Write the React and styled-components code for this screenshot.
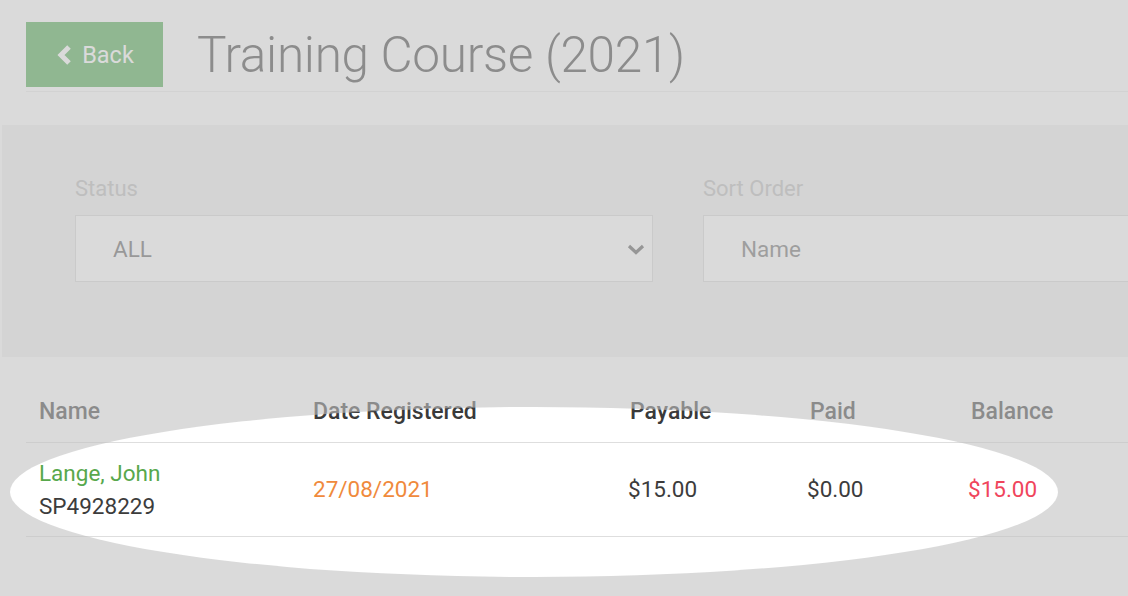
import React from "react";
import styled, { createGlobalStyle } from "styled-components";

const Global = createGlobalStyle`
  html, body {
    margin: 0;
    padding: 0;
    background: #fff;
    overflow: hidden;
  }
  * {
    box-sizing: border-box;
  }
`;

const Page = styled.div`
  position: relative;
  width: 1128px;
  height: 596px;
  overflow: hidden;
  background: #fff;
  font-family: Roboto, "Liberation Sans", sans-serif;
  color: #333;
`;

const Header = styled.div`
  display: flex;
  align-items: center;
  gap: 34px;
  margin: 0 0 0 26px;
  padding: 22px 0 4px 0;
  border-bottom: 1px solid #ececec;
`;

const BackButton = styled.button`
  display: flex;
  align-items: center;
  justify-content: center;
  gap: 10px;
  width: 137px;
  height: 65px;
  border: none;
  background: #47a74a;
  color: #fff;
  font-family: inherit;
  font-size: 23.5px;
  padding: 0 2px 0 3px;
  cursor: pointer;
`;

const Title = styled.h1`
  margin: 0;
  font-weight: 300;
  font-size: 49.5px;
  color: #3c3c3c;
  letter-spacing: -0.3px;
`;

const FilterPanel = styled.div`
  margin: 33px 0 0 2px;
  height: 232px;
  background: #efefef;
  padding: 51px 0 0 73px;
  display: grid;
  grid-template-columns: 578px 578px;
  column-gap: 50px;
  align-content: start;
`;

const Field = styled.div`
  display: flex;
  flex-direction: column;
  gap: 14px;
`;

const Label = styled.label`
  font-size: 22px;
  color: #b8b8b8;
`;

const Select = styled.div`
  display: flex;
  align-items: center;
  justify-content: space-between;
  height: 67px;
  background: #fff;
  border: 1px solid #d8d8d8;
  padding: 0 7px 0 37px;
  font-size: 22.5px;
  color: ${(p) => (p.muted ? "#6a6a6a" : "#5a5a5a")};
`;

const Table = styled.div`
  margin: 24px 0 0 26px;
`;

const Row = styled.div`
  display: grid;
  grid-template-columns: 274px 317px 180px 161px 1fr;
  align-items: center;
  height: ${(p) => p.h}px;
  border-bottom: 1px solid #dedede;
`;

const Th = styled.div`
  padding-left: ${(p) => p.pl ?? 13}px;
  font-size: 23px;
  font-weight: 500;
  color: #3a3a3a;
`;

const Td = styled.div`
  padding-left: ${(p) => p.pl ?? 13}px;
  font-size: 22.5px;
  color: ${(p) => p.color || "#3c3c3c"};
  line-height: 33px;
`;

const Spotlight = styled.div`
  position: absolute;
  left: 10px;
  top: 407px;
  width: 1048px;
  height: 170px;
  border-radius: 50%;
  box-shadow: 0 0 0 2000px rgba(194, 194, 194, 0.6);
  pointer-events: none;
`;

const DownChevron = ({ color = "#555" }) => (
  <svg width="18" height="12" viewBox="0 0 18 12">
    <path
      d="M2 3 L9 9.5 L16 3"
      fill="none"
      stroke={color}
      strokeWidth="3.2"
      strokeLinejoin="miter"
    />
  </svg>
);

const LeftChevron = () => (
  <svg width="16" height="20" viewBox="0 0 16 20">
    <path
      d="M13 2 L5 10 L13 18"
      fill="none"
      stroke="#fff"
      strokeWidth="5"
      strokeLinejoin="miter"
    />
  </svg>
);

export default function App() {
  return (
    <Page>
      <Global />
      <Header>
        <BackButton>
          <LeftChevron />
          Back
        </BackButton>
        <Title>Training Course (2021)</Title>
      </Header>

      <FilterPanel>
        <Field>
          <Label>Status</Label>
          <Select>
            ALL
            <DownChevron />
          </Select>
        </Field>
        <Field>
          <Label>Sort Order</Label>
          <Select muted>Name</Select>
        </Field>
      </FilterPanel>

      <Table>
        <Row h={62}>
          <Th>Name</Th>
          <Th>Date Registered</Th>
          <Th>Payable</Th>
          <Th>Paid</Th>
          <Th>Balance</Th>
        </Row>
        <Row h={94}>
          <div>
            <Td color="#58a84c">Lange, John</Td>
            <Td>SP4928229</Td>
          </div>
          <Td color="#f08a3c">27/08/2021</Td>
          <Td pl={11}>$15.00</Td>
          <Td pl={10}>$0.00</Td>
          <Td pl={10} color="#f0455c">$15.00</Td>
        </Row>
      </Table>

      <Spotlight />
    </Page>
  );
}
